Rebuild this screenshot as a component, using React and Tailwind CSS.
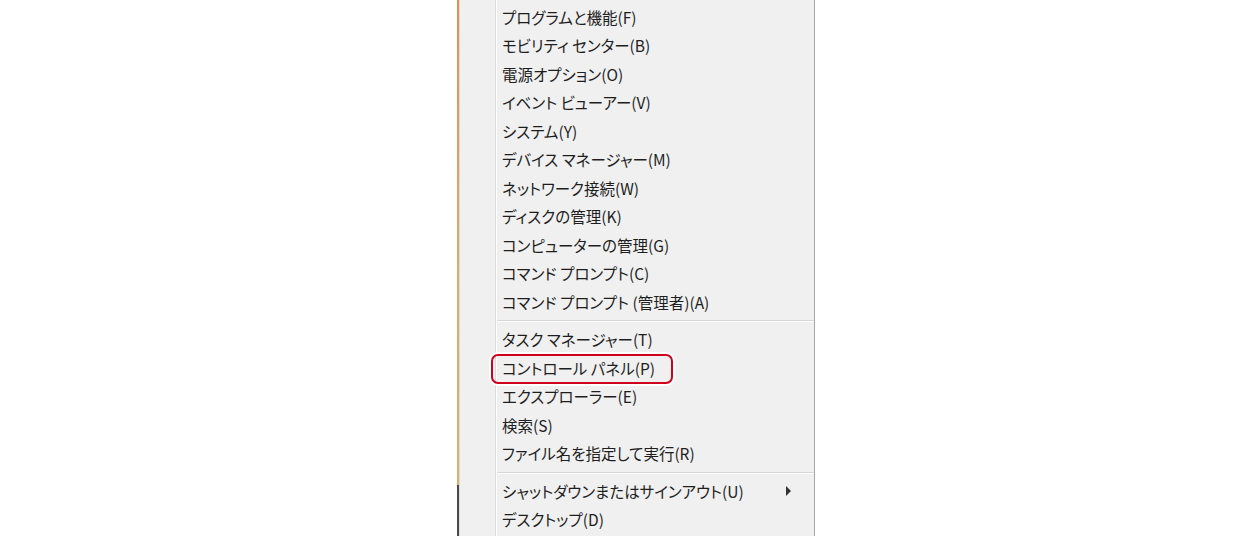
import React from 'react';

const groups = [
  [
    'プログラムと機能(F)',
    'モビリティ センター(B)',
    '電源オプション(O)',
    'イベント ビューアー(V)',
    'システム(Y)',
    'デバイス マネージャー(M)',
    'ネットワーク接続(W)',
    'ディスクの管理(K)',
    'コンピューターの管理(G)',
    'コマンド プロンプト(C)',
    'コマンド プロンプト (管理者)(A)',
  ],
  [
    'タスク マネージャー(T)',
    'コントロール パネル(P)',
    'エクスプローラー(E)',
    '検索(S)',
    'ファイル名を指定して実行(R)',
  ],
  ['シャットダウンまたはサインアウト(U)', 'デスクトップ(D)'],
];

const Item = ({ label }) => (
  <div className="relative h-[28.5px] flex items-center pl-[5px] pr-3">
    <span className="whitespace-nowrap">{label}</span>
    {label === 'コントロール パネル(P)' && (
      <div className="absolute left-[-6px] top-[0px] w-[182px] h-[30px] rounded-[7px] border-2 border-[#d0021b] shadow-[0_0_0_2px_#ffffff] pointer-events-none" />
    )}
    {label.startsWith('シャットダウン') && (
      <span className="ml-auto mr-[11px] w-0 h-0 border-y-[5px] border-y-transparent border-l-[5px] border-l-[#333333]" />
    )}
  </div>
);

export default function App() {
  return (
    <div className="h-[536px] bg-white overflow-hidden">
      <div className="ml-[457px] w-[358px] h-full flex bg-[#f0f0f0] text-[15.5px] text-[#1e1e1e] [font-family:'Noto_Sans_CJK_JP',sans-serif] [font-feature-settings:'palt']">
        <div className="w-[2px] flex flex-col">
          <div className="h-[485px] bg-gradient-to-b from-[#e29050] via-[#dcaa68] to-[#d8b468]" />
          <div className="flex-1 bg-[#4a4a4a]" />
        </div>
        <div className="w-px bg-[#dcdcdc]" />
        <div className="w-[36px] border-r border-[#dcdcdc]" />
        <div className="w-px bg-white" />
        <div className="flex-1 border-r border-[#a8a8a8] pt-[3px]">
          {groups.map((g, i) => (
            <div key={i}>
              {i > 0 && (
                <div className="my-[3.5px] h-[2px] border-t border-[#d7d7d7] bg-white" />
              )}
              {g.map((label) => (
                <Item key={label} label={label} />
              ))}
            </div>
          ))}
        </div>
      </div>
    </div>
  );
}
